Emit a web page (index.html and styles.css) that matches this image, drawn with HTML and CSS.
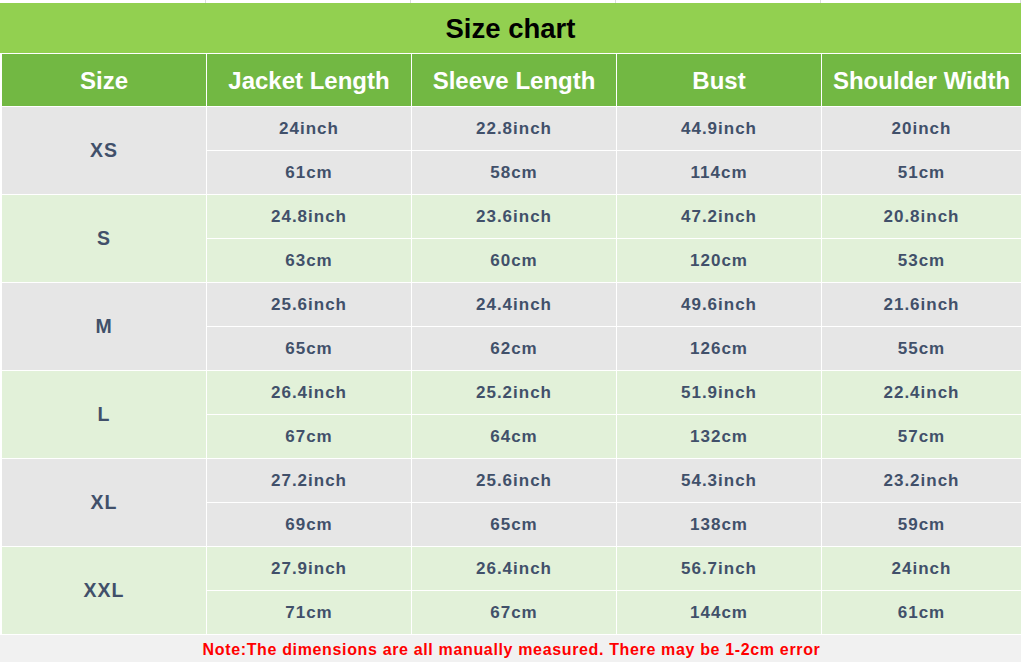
FILE: index.html
```html
<!DOCTYPE html>
<html>
<head>
<meta charset="utf-8">
<link rel="stylesheet" href="styles.css">
</head>
<body>
<div class="page">
  <div class="strip"><span></span><span></span><span></span><span></span><span></span></div>
  <div class="chart">
    <div class="title">Size chart</div>
    <div class="head">Size</div>
    <div class="head">Jacket Length</div>
    <div class="head">Sleeve Length</div>
    <div class="head">Bust</div>
    <div class="head">Shoulder Width</div>

    <div class="size gray">XS</div>
    <div class="cell gray">24inch</div><div class="cell gray">22.8inch</div><div class="cell gray">44.9inch</div><div class="cell gray">20inch</div>
    <div class="cell gray">61cm</div><div class="cell gray">58cm</div><div class="cell gray">114cm</div><div class="cell gray">51cm</div>

    <div class="size green">S</div>
    <div class="cell green">24.8inch</div><div class="cell green">23.6inch</div><div class="cell green">47.2inch</div><div class="cell green">20.8inch</div>
    <div class="cell green">63cm</div><div class="cell green">60cm</div><div class="cell green">120cm</div><div class="cell green">53cm</div>

    <div class="size gray">M</div>
    <div class="cell gray">25.6inch</div><div class="cell gray">24.4inch</div><div class="cell gray">49.6inch</div><div class="cell gray">21.6inch</div>
    <div class="cell gray">65cm</div><div class="cell gray">62cm</div><div class="cell gray">126cm</div><div class="cell gray">55cm</div>

    <div class="size green">L</div>
    <div class="cell green">26.4inch</div><div class="cell green">25.2inch</div><div class="cell green">51.9inch</div><div class="cell green">22.4inch</div>
    <div class="cell green">67cm</div><div class="cell green">64cm</div><div class="cell green">132cm</div><div class="cell green">57cm</div>

    <div class="size gray">XL</div>
    <div class="cell gray">27.2inch</div><div class="cell gray">25.6inch</div><div class="cell gray">54.3inch</div><div class="cell gray">23.2inch</div>
    <div class="cell gray">69cm</div><div class="cell gray">65cm</div><div class="cell gray">138cm</div><div class="cell gray">59cm</div>

    <div class="size green">XXL</div>
    <div class="cell green">27.9inch</div><div class="cell green">26.4inch</div><div class="cell green">56.7inch</div><div class="cell green">24inch</div>
    <div class="cell green">71cm</div><div class="cell green">67cm</div><div class="cell green">144cm</div><div class="cell green">61cm</div>

    <div class="note">Note:The dimensions are all manually measured. There may be 1-2cm error</div>
  </div>
</div>
</body>
</html>
```

FILE: styles.css
```css
html, body {
  margin: 0;
  padding: 0;
  background: #ffffff;
}

.page {
  width: 1021px;
  height: 662px;
  overflow: hidden;
  font-family: "Liberation Sans", Arial, sans-serif;
  font-weight: bold;
}

.strip {
  display: grid;
  grid-template-columns: 206px 205px 205px 205px 1fr;
  height: 3px;
}

.strip span {
  border-right: 1px solid #dcdcdc;
}

.chart {
  display: grid;
  grid-template-columns: 204px 204px 204px 204px 1fr;
  grid-template-rows: 50px 52px repeat(12, 43px) 28px;
  column-gap: 1px;
  row-gap: 1px;
  padding-left: 2px;
  background: #ffffff;
}

.title {
  grid-column: 1 / -1;
  background: #92d050;
  color: #000000;
  font-size: 27.5px;
  display: flex;
  align-items: center;
  justify-content: center;
  margin-left: -2px;
  padding-top: 1px;
}

.head {
  background: #72b843;
  color: #ffffff;
  font-size: 24px;
  display: flex;
  align-items: center;
  justify-content: center;
  padding-top: 1px;
}

.size {
  grid-row: span 2;
  grid-column: 1;
  color: #41506a;
  font-size: 19.5px;
  letter-spacing: 1px;
  display: flex;
  align-items: center;
  justify-content: center;
}

.cell {
  color: #41506a;
  font-size: 17px;
  letter-spacing: 1px;
  display: flex;
  align-items: center;
  justify-content: center;
}

.gray {
  background: #e6e6e6;
}

.green {
  background: #e2f1d9;
}

.note {
  grid-column: 1 / -1;
  background: #f1f1f1;
  color: #ff0000;
  font-size: 16px;
  letter-spacing: 0.65px;
  display: flex;
  align-items: center;
  justify-content: center;
  margin-left: -2px;
  padding-left: 2px;
  padding-top: 1px;
}
```
